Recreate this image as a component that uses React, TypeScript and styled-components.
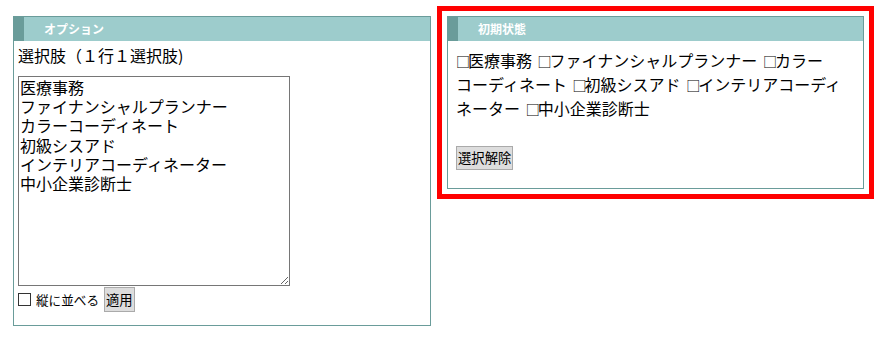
import React from "react";
import styled, { createGlobalStyle } from "styled-components";

const GlobalStyle = createGlobalStyle`
  body {
    margin: 0;
    background: #ffffff;
    font-family: "Noto Sans CJK JP", "Noto Sans", sans-serif;
    color: #000000;
  }
`;

const Page = styled.div`
  display: flex;
  align-items: flex-start;
  gap: 16px;
  padding: 16px 0 0 13px;
`;

const Panel = styled.section<{ $width: number; $highlight?: boolean }>`
  box-sizing: border-box;
  width: ${(props) => props.$width}px;
  border: 1px solid #6a9c9a;
  background: #ffffff;
  outline: ${(props) => (props.$highlight ? "5px solid #ff0000" : "none")};
  outline-offset: 5px;
`;

const PanelHeader = styled.h2`
  display: flex;
  align-items: center;
  height: 24px;
  margin: 0;
  padding: 0 0 0 20px;
  border-left: 10px solid #6a9c9a;
  background: #9dcccc;
  color: #ffffff;
  font-size: 12px;
  font-weight: 700;
  line-height: 24px;
`;

const PanelBody = styled.div<{ $pad: string }>`
  display: flex;
  flex-direction: column;
  align-items: flex-start;
  padding: ${(props) => props.$pad};
`;

const Caption = styled.p`
  margin: 0 0 11px;
  font-size: 16px;
  line-height: 19px;
`;

const ListBox = styled.textarea`
  box-sizing: border-box;
  width: 272px;
  height: 210px;
  margin: 0;
  padding: 1px;
  border: 1px solid #767676;
  border-radius: 0;
  font-family: "Noto Sans CJK JP", sans-serif;
  font-size: 16px;
  line-height: 19.2px;
  color: #000000;
  outline: none;
`;

const ControlRow = styled.div`
  display: flex;
  align-items: center;
  margin-top: 1px;
`;

const CheckLabel = styled.label`
  display: flex;
  align-items: center;
  gap: 5px;
  margin-right: 5px;
  font-size: 12.6px;
`;

const Check = styled.input`
  appearance: none;
  box-sizing: border-box;
  width: 13px;
  height: 13px;
  margin: 0;
  border: 1px solid #333333;
  background: #ffffff;
`;

const PlainButton = styled.button`
  box-sizing: border-box;
  height: ${(props) => (props.type === "reset" ? 24 : 25)}px;
  padding: 0 1px;
  border: 1px solid #aaaaaa;
  border-radius: 0;
  background: #dddddd;
  color: #000000;
  font-family: "Noto Sans CJK JP", sans-serif;
  font-size: 13.33px;
  line-height: 1;
`;

const ChoiceText = styled.p`
  width: 391px;
  margin: 0 0 26px;
  font-size: 16px;
  line-height: 24px;
  word-spacing: 2px;
  line-break: strict;
`;

const Box = styled.span`
  font-size: 14px;
  line-height: 1;
  letter-spacing: -2px;
`;

const NoBreak = styled.span`
  white-space: nowrap;
`;

const choices = [
  "医療事務",
  "ファイナンシャルプランナー",
  "カラーコーディネート",
  "初級シスアド",
  "インテリアコーディネーター",
  "中小企業診断士",
];

// keep a prolonged sound mark together with the kana before it
const withKinsoku = (text: string) =>
  text.split(/(.ー)/).map((part, i) =>
    part.length === 2 && part[1] === "ー" ? (
      <NoBreak key={i}>{part}</NoBreak>
    ) : (
      part
    )
  );

export default function App() {
  return (
    <>
      <GlobalStyle />
      <Page lang="ja">
        <Panel $width={418}>
          <PanelHeader>オプション</PanelHeader>
          <PanelBody $pad="5px 4px 13px">
            <Caption>選択肢（１行１選択肢)</Caption>
            <ListBox defaultValue={choices.join("\n")} spellCheck={false} />
            <ControlRow>
              <CheckLabel>
                <Check type="checkbox" />
                縦に並べる
              </CheckLabel>
              <PlainButton type="button">適用</PlainButton>
            </ControlRow>
          </PanelBody>
        </Panel>
        <Panel $width={417} $highlight>
          <PanelHeader>初期状態</PanelHeader>
          <PanelBody $pad="7px 8px 18px">
            <ChoiceText>
              {choices.map((c, i) => (
                <React.Fragment key={c}>
                  <Box>□</Box>
                  {withKinsoku(c)}
                  {i < choices.length - 1 ? " " : ""}
                </React.Fragment>
              ))}
            </ChoiceText>
            <PlainButton type="reset">選択解除</PlainButton>
          </PanelBody>
        </Panel>
      </Page>
    </>
  );
}
